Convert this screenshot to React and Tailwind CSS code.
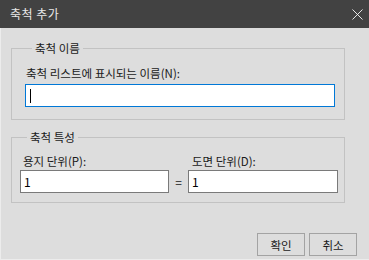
import { X } from 'lucide-react';

const font = { fontFamily: '"Noto Sans CJK KR", "Noto Sans", sans-serif' };

const App = () => {
  return (
    <div className="w-[369px] h-[260px] flex flex-col bg-[#dddddd] text-[11.5px] leading-[16px] text-[#1a1a1a]" style={font}>
      <div className="h-[28px] shrink-0 bg-[#424242] flex items-center justify-between pl-[10px] pr-[2px]">
        <span className="text-[12px] text-[#e8e8e8] tracking-[0.5px]">축척 추가</span>
        <X className="w-[19px] h-[19px] text-white" strokeWidth={1.1} />
      </div>
      <div className="flex-1 flex flex-col border-l border-b border-[#ececec]">
        <fieldset className="ml-[10px] mt-[12px] w-[334px] border border-[#c2c2c2] pl-[13px] pr-[9px] pb-[12px]">
          <legend className="ml-[7px] px-[3px]">축척 이름</legend>
          <div className="mt-[9px] pl-[1px]">축척 리스트에 표시되는 이름(N):</div>
          <div className="mt-[3px] h-[23px] w-[310px] bg-white border border-[#0078d7] flex items-center pl-[4px]">
            <div className="w-[1px] h-[14px] bg-black" />
          </div>
        </fieldset>
        <fieldset className="ml-[10px] mt-[9px] w-[334px] border border-[#c2c2c2] pl-[8px] pb-[9px]">
          <legend className="ml-[7px] px-[3px]">축척 특성</legend>
          <div className="mt-[8px] flex items-end">
            <div className="w-[149px] flex flex-col">
              <div className="pl-[3px]">용지 단위(P):</div>
              <div className="mt-[1px] h-[23px] bg-white border border-[#7a7a7a] flex items-center pl-[3px] text-[12px] text-black">1</div>
            </div>
            <div className="w-[19px] h-[23px] flex items-center justify-center text-[12px]">=</div>
            <div className="w-[150px] flex flex-col">
              <div className="pl-[4px]">도면 단위(D):</div>
              <div className="mt-[1px] h-[23px] bg-white border border-[#7a7a7a] flex items-center pl-[3px] text-[12px] text-black">1</div>
            </div>
          </div>
        </fieldset>
        <div className="mt-auto mb-[3px] flex justify-end gap-[4px] pr-[12px]">
          <button className="w-[48px] h-[23px] border border-[#a3a3a3] bg-[#dddddd] flex items-center justify-center">확인</button>
          <button className="w-[48px] h-[23px] border border-[#a3a3a3] bg-[#dddddd] flex items-center justify-center">취소</button>
        </div>
      </div>
    </div>
  );
};

export default App;
